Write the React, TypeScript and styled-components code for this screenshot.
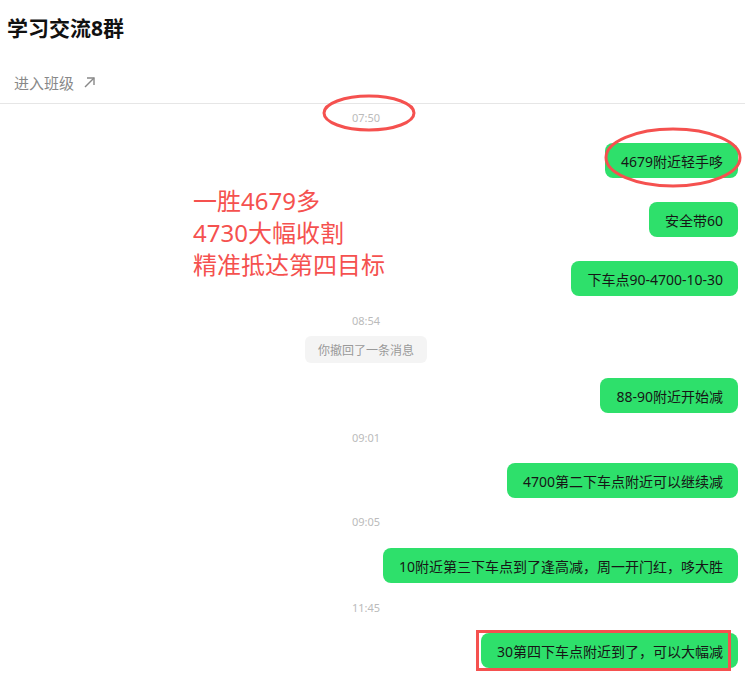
import React from "react";
import styled, { createGlobalStyle } from "styled-components";

const Global = createGlobalStyle`
  html, body { margin: 0; padding: 0; background: #fff; }
  body { font-family: "Noto Sans", "Noto Sans CJK SC", sans-serif; }
`;

const Page = styled.div`
  position: relative;
  width: 745px;
  height: 687px;
  overflow: hidden;
  background: #fff;
`;

const Header = styled.header`
  padding-top: 14px;
  border-bottom: 1px solid #e6e6e6;
  padding-bottom: 7px;
`;

const Title = styled.h1`
  margin: 0;
  padding-left: 7px;
  font-size: 21px;
  line-height: 28px;
  font-weight: 700;
  color: #111;
`;

const EnterRow = styled.div`
  margin-top: 26px;
  padding-left: 14px;
  height: 28px;
  display: flex;
  align-items: center;
  gap: 9px;
  font-size: 15px;
  color: #888;
`;

const ChatList = styled.div`
  display: flex;
  flex-direction: column;
  padding: 7px 7px 0 0;
`;

const TimeRow = styled.div<{ $top: number }>`
  margin-top: ${(p) => p.$top}px;
  padding-right: 6px;
  text-align: center;
  font-size: 11px;
  line-height: 14px;
  color: #bbb;
`;

const NoticeRow = styled.div<{ $top: number }>`
  margin-top: ${(p) => p.$top}px;
  padding-right: 6px;
  display: flex;
  justify-content: center;
`;

const Notice = styled.div`
  height: 27px;
  padding: 0 13px;
  border-radius: 6px;
  background: #f4f4f4;
  color: #999;
  font-size: 12px;
  display: flex;
  align-items: center;
`;

const BubbleRow = styled.div<{ $top: number }>`
  margin-top: ${(p) => p.$top}px;
  display: flex;
  justify-content: flex-end;
`;

const Bubble = styled.div`
  height: 35px;
  padding: 0 15px 0 16px;
  border-radius: 8px;
  background: #2ee06b;
  color: #161616;
  font-size: 14px;
  display: flex;
  align-items: center;
  white-space: nowrap;
`;

const Overlay = styled.svg`
  position: absolute;
  left: 0;
  top: 0;
  pointer-events: none;
`;

const Annotation = styled.div`
  position: absolute;
  left: 193px;
  top: 185px;
  font-size: 24px;
  line-height: 32px;
  color: #f5514f;
  white-space: nowrap;
`;

type Item =
  | { kind: "time"; text: string; top: number }
  | { kind: "notice"; text: string; top: number }
  | { kind: "msg"; text: string; top: number };

const items: Item[] = [
  { kind: "time", text: "07:50", top: 0 },
  { kind: "msg", text: "4679附近轻手哆", top: 18 },
  { kind: "msg", text: "安全带60", top: 24 },
  { kind: "msg", text: "下车点90-4700-10-30", top: 24 },
  { kind: "time", text: "08:54", top: 18 },
  { kind: "notice", text: "你撤回了一条消息", top: 8 },
  { kind: "msg", text: "88-90附近开始减", top: 15 },
  { kind: "time", text: "09:01", top: 18 },
  { kind: "msg", text: "4700第二下车点附近可以继续减", top: 18 },
  { kind: "time", text: "09:05", top: 17 },
  { kind: "msg", text: "10附近第三下车点到了逢高减，周一开门红，哆大胜", top: 19 },
  { kind: "time", text: "11:45", top: 18 },
  { kind: "msg", text: "30第四下车点附近到了，可以大幅减", top: 18 },
];

const ArrowIcon = () => (
  <svg width="13" height="13" viewBox="0 0 13 13" fill="none" stroke="#888" strokeWidth="1.4">
    <path d="M2 11L11 2" />
    <path d="M4 2H11V9" />
  </svg>
);

export default function App() {
  return (
    <Page>
      <Global />
      <Header>
        <Title>学习交流8群</Title>
        <EnterRow>
          <span>进入班级</span>
          <ArrowIcon />
        </EnterRow>
      </Header>
      <ChatList>
        {items.map((it, i) => {
          if (it.kind === "time")
            return (
              <TimeRow key={i} $top={it.top}>
                {it.text}
              </TimeRow>
            );
          if (it.kind === "notice")
            return (
              <NoticeRow key={i} $top={it.top}>
                <Notice>{it.text}</Notice>
              </NoticeRow>
            );
          return (
            <BubbleRow key={i} $top={it.top}>
              <Bubble>{it.text}</Bubble>
            </BubbleRow>
          );
        })}
      </ChatList>
      <Annotation>
        一胜4679多
        <br />
        4730大幅收割
        <br />
        精准抵达第四目标
      </Annotation>
      <Overlay width="745" height="687" viewBox="0 0 745 687">
        <ellipse cx="369" cy="113" rx="45" ry="17" fill="none" stroke="#f5514f" strokeWidth="3" />
        <ellipse cx="673" cy="157.5" rx="67" ry="28.5" fill="none" stroke="#f5514f" strokeWidth="3" />
        <rect x="477.5" y="631.5" width="252" height="38" fill="none" stroke="#f5514f" strokeWidth="3" />
      </Overlay>
    </Page>
  );
}
